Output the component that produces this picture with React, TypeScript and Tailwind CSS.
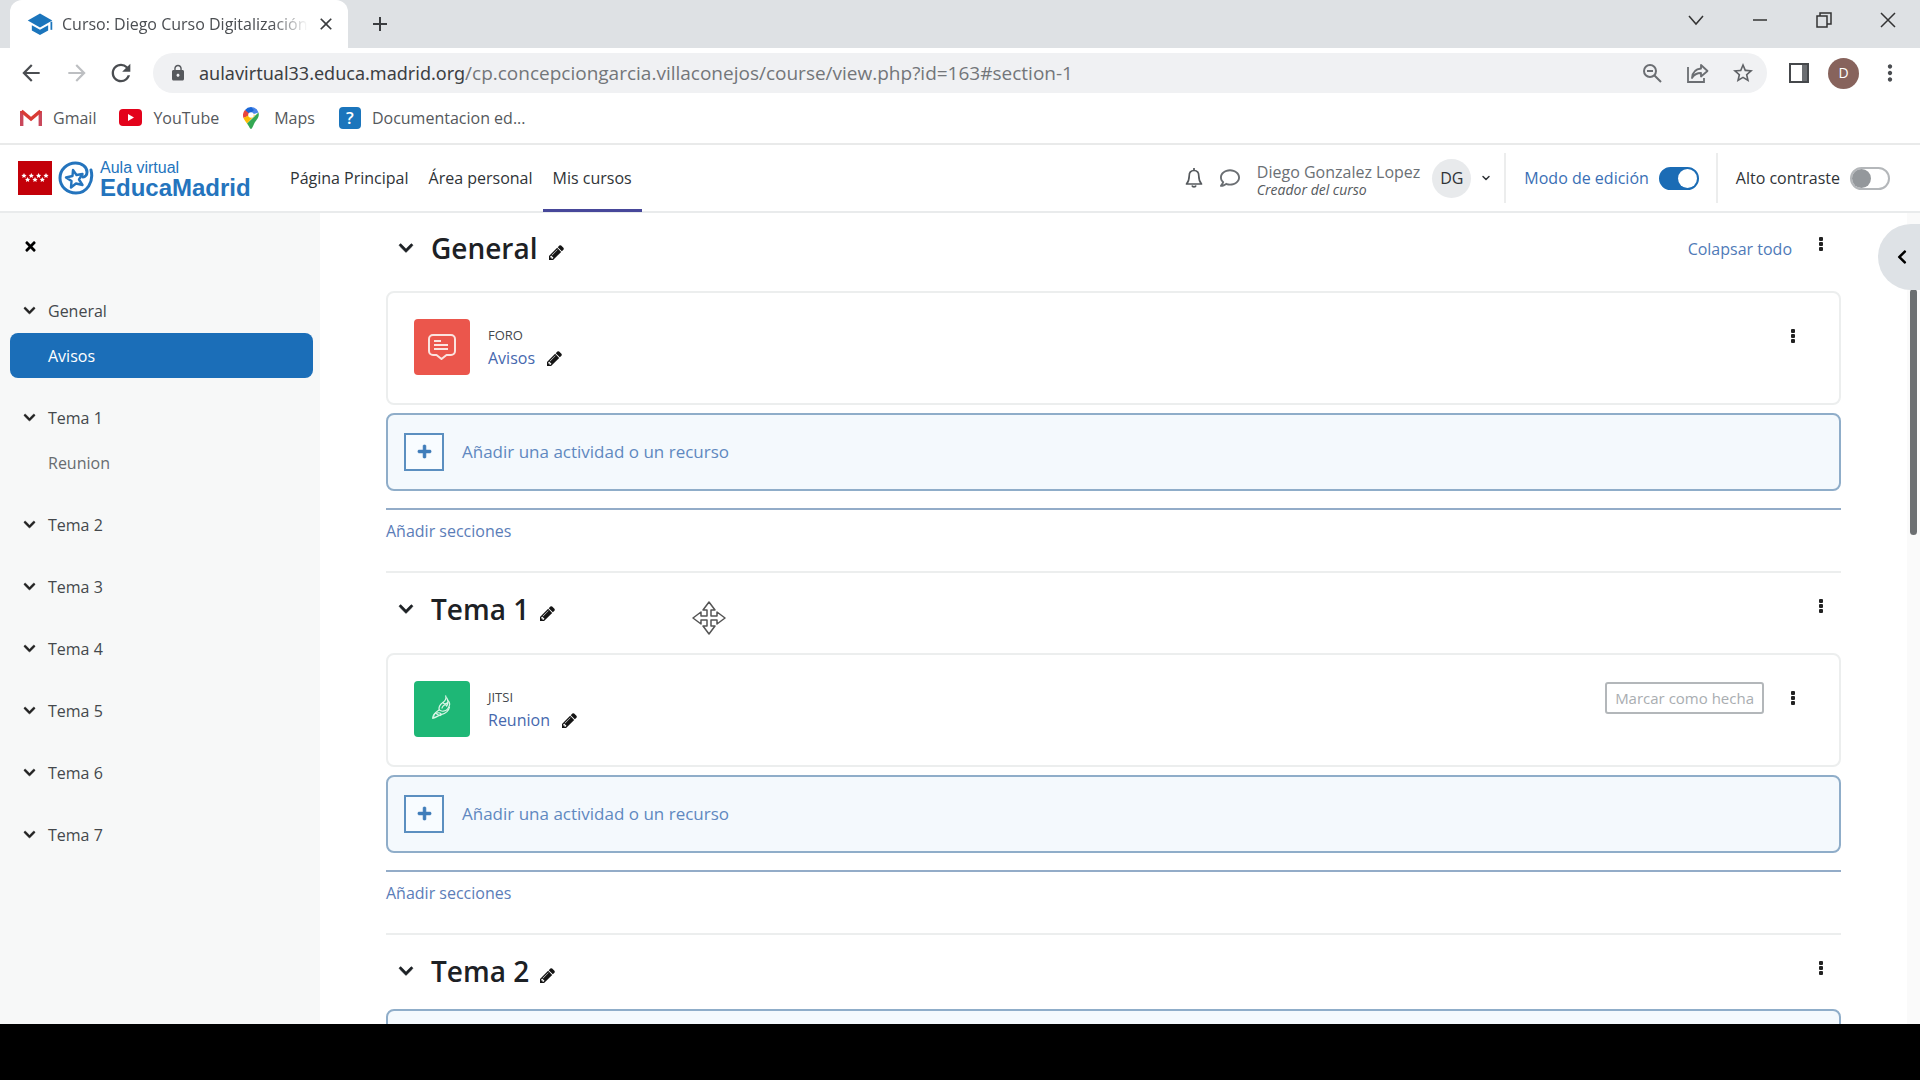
import React, { useState } from 'react';
import {
  MdArrowBack,
  MdArrowForward,
  MdRefresh,
  MdLock,
  MdClose,
  MdAdd,
  MdStarBorder,
  MdMoreVert,
} from 'react-icons/md';
import { FaChevronDown, FaChevronLeft, FaPlus, FaRegComment, FaTimes } from 'react-icons/fa';
import { ChevronDown } from 'lucide-react';
import clsx from 'clsx';

interface Activity {
  type: string;
  name: string;
  color: string;
  icon: React.ReactNode;
  canComplete?: boolean;
}

interface Section {
  title: string;
  activities: Activity[];
}

const ForumIcon = () => (
  <svg viewBox="0 0 28 28" className="size-7" fill="none" stroke="#fbe3df" strokeWidth="2">
    <path d="M5 2h18a4 4 0 0 1 4 4v12a4 4 0 0 1-4 4h-4.500l-5 4-5-4H5a4 4 0 0 1-4-4V6a4 4 0 0 1 4-4z" strokeLinejoin="round" />
    <path d="M6 8h7M6 12h14M6 16h14" />
  </svg>
);

const JitsiIcon = () => (
  <svg viewBox="0 0 24 30" className="h-7 w-6" fill="none" stroke="#d9f5e6" strokeWidth="1.300" strokeLinejoin="round" strokeLinecap="round">
    <path d="M16 1c1 3-.5 5-3 7-3 2-5 4-4 8 2 2 7 2 9-1 3-4 3-7 0-9" />
    <path d="M9 16c-3 2-7 4-7 9 4-1 6-3 9-4 4-1 8-3 9-8" />
    <path d="M3 24c0-3 2-5 5-5s4 2 2 3M13 8c1 2 3 2 5 0M12 14c1-3 3-4 5-3M17 3c2 3 2 6 0 9M6 20l3 2" />
  </svg>
);

const PencilIcon = () => (
  <svg viewBox="0 0 1536 1536" className="size-[15px]" fill="#151515">
    <path d="M363 1408l91-91-235-235-91 91v107h128v128h107zM886 480q0-22-22-22-10 0-17 7l-542 542q-7 7-7 17 0 22 22 22 10 0 17-7l542-542q7-7 7-17zM832 288l416 416-832 832H0v-416zM1515 384q0 53-37 90l-166 166-416-416 166-165q36-38 90-38 53 0 91 38l235 234q37 39 37 91z" />
  </svg>
);

const sections: Section[] = [
  {
    title: 'General',
    activities: [{ type: 'FORO', name: 'Avisos', color: 'bg-[#eb564c]', icon: <ForumIcon /> }],
  },
  {
    title: 'Tema 1',
    activities: [
      { type: 'JITSI', name: 'Reunion', color: 'bg-[#1eb776]', icon: <JitsiIcon />, canComplete: true },
    ],
  },
  { title: 'Tema 2', activities: [] },
  { title: 'Tema 3', activities: [] },
  { title: 'Tema 4', activities: [] },
  { title: 'Tema 5', activities: [] },
  { title: 'Tema 6', activities: [] },
  { title: 'Tema 7', activities: [] },
];

const BrowserTabs = () => (
  <div className="flex h-12 shrink-0 items-stretch bg-[#dee1e4] pl-2.5">
    <div className="flex w-[338px] items-center rounded-t-xl bg-white pr-3 pl-4">
      <svg viewBox="0 0 24 24" className="size-7 shrink-0" fill="#1b75bc">
        <path d="M12 3 1.500 9 12 15l10.500-6z" />
        <path d="M5 13v4.500l7 4 7-4V13l-7 4z" />
        <path d="M21 10h1.500v7H21z" />
      </svg>
      <span className="ml-2 flex-1 overflow-hidden text-[16px] whitespace-nowrap text-[#4b4e52] [mask-image:linear-gradient(to_right,black_85%,transparent)]">
        Curso: Diego Curso Digitalización
      </span>
      <button aria-label="Cerrar pestaña" className="ml-2">
        <MdClose className="size-5 text-[#3a3c3f]" />
      </button>
    </div>
    <button aria-label="Nueva pestaña" className="ml-5">
      <MdAdd className="size-6 text-[#3a3c3f]" />
    </button>
    <div className="ml-auto flex h-10 items-center text-[#333]">
      <button aria-label="Buscar pestañas" className="flex w-[65px] justify-center">
        <svg viewBox="0 0 16 16" className="size-4" fill="none" stroke="currentColor" strokeWidth="1.500">
          <path d="M1 4l7 8 7-8" />
        </svg>
      </button>
      <button aria-label="Minimizar" className="flex w-16 justify-center">
        <svg viewBox="0 0 16 16" className="size-4" stroke="currentColor" strokeWidth="1.500">
          <path d="M1 8h14" />
        </svg>
      </button>
      <button aria-label="Restaurar" className="flex w-16 justify-center">
        <svg viewBox="0 0 16 16" className="size-4" fill="none" stroke="currentColor" strokeWidth="1.500">
          <path d="M1 4h10v11H1zM4 4V1h11v11h-4" />
        </svg>
      </button>
      <button aria-label="Cerrar" className="flex w-16 justify-center">
        <svg viewBox="0 0 16 16" className="size-4" stroke="currentColor" strokeWidth="1.500">
          <path d="M1 1l14 14M15 1L1 15" />
        </svg>
      </button>
    </div>
  </div>
);

const AddressBar = () => {
  const [url, setUrl] = useState('/cp.concepciongarcia.villaconejos/course/view.php?id=163#section-1');

  return (
    <div className="flex h-[50px] shrink-0 items-center bg-white pr-[17px] pl-[18px] text-[#4a4d51]">
      <button aria-label="Atrás">
        <MdArrowBack className="size-[26px]" />
      </button>
      <button aria-label="Adelante" className="ml-5 text-[#bdbfc2]">
        <MdArrowForward className="size-[26px]" />
      </button>
      <button aria-label="Recargar" className="ml-[17px]">
        <MdRefresh className="size-7" />
      </button>
      <div className="ml-[18px] flex h-10 flex-1 items-center rounded-full bg-[#f0f1f3] pr-3 pl-4">
        <MdLock className="size-[18px] shrink-0 text-[#56595d]" />
        <label htmlFor="url" className="ml-3 font-['Noto_Sans',sans-serif] text-[18px] text-[#3c3f43]">
          aulavirtual33.educa.madrid.org
        </label>
        <input
          id="url"
          value={url}
          onChange={(e) => setUrl(e.target.value)}
          className="min-w-0 flex-1 bg-transparent text-[19px] text-[#73767a] outline-none"
        />
        <button aria-label="Zoom" className="ml-4">
          <svg viewBox="0 0 20 20" className="size-5" fill="none" stroke="#6b6e72" strokeWidth="2">
            <circle cx="8" cy="8" r="6" />
            <path d="M12.500 12.500L19 19M5 8h6" />
          </svg>
        </button>
        <button aria-label="Compartir" className="ml-[25px]">
          <svg viewBox="0 0 22 20" className="h-5 w-[22px]" fill="none" stroke="#6b6e72" strokeWidth="1.800">
            <path d="M1 4v15h16v-4" />
            <path d="M14 2l6.500 6-6.500 5.500V10c-4 0-7 1.500-9 5 .5-5.500 3.500-9 9-9.500z" strokeLinejoin="round" />
          </svg>
        </button>
        <button aria-label="Marcador" className="ml-[22px]">
          <MdStarBorder className="size-6 text-[#5f6266]" />
        </button>
      </div>
      <button aria-label="Panel lateral" className="ml-[22px]">
        <svg viewBox="0 0 20 20" className="size-5" fill="none" stroke="#45484b" strokeWidth="2">
          <path d="M13 1h6v18h-6z" fill="#6b6e72" stroke="none" />
          <path d="M1 1h18v18H1z" />
        </svg>
      </button>
      <button
        aria-label="Perfil"
        className="ml-[19px] flex size-[31px] items-center justify-center rounded-full bg-[#87635c] text-sm text-white"
      >
        D
      </button>
      <button aria-label="Menú" className="ml-[18px]">
        <MdMoreVert className="size-[26px]" />
      </button>
    </div>
  );
};

const Bookmarks = () => (
  <nav className="flex h-[47px] shrink-0 items-center border-b-2 border-[#e9eaea] bg-white pb-1.5 pl-5 text-[16px] text-[#55585c]">
    <a href="#gmail" className="flex items-center gap-[11px]">
      <svg viewBox="0 0 22 17" className="h-[17px] w-[22px]" fill="none" strokeWidth="3.400">
        <path d="M1.700 17V2" stroke="#c9485b" />
        <path d="M20.300 17V2" stroke="#c9485b" />
        <path d="M1.500 2L11 10l9.500-8" stroke="#d93b34" />
      </svg>
      Gmail
    </a>
    <a href="#youtube" className="ml-[23px] flex items-center gap-[11px]">
      <svg viewBox="0 0 23 17" className="h-[17px] w-[23px]">
        <rect width="23" height="17" rx="4" fill="#e3021b" />
        <path d="M9 5v7l6-3.500z" fill="#fff" />
      </svg>
      YouTube
    </a>
    <a href="#maps" className="ml-6 flex items-center gap-[15px]">
      <svg viewBox="0 0 16 22" className="h-[22px] w-4">
        <path d="M8 0a8 8 0 0 1 7.500 5.500L8 8z" fill="#4a86e8" />
        <path d="M2 3a8 8 0 0 1 6-3l3 3-6 6z" fill="#1a66d6" />
        <path d="M2 3a8 8 0 0 0-1.500 8L8 8z" fill="#e8453c" />
        <path d="M.5 11c.5 1.500 2 3.500 3.500 5.500L12 8l-4-1z" fill="#fbbc04" />
        <path d="M15.500 5.500c1.500 5-3 8-4.500 11.500-1 2-2 5-3 5s-2-3-4-5.500z" fill="#34a853" />
        <circle cx="8" cy="8" r="2.800" fill="#fff" />
      </svg>
      Maps
    </a>
    <a href="#documentacion" className="ml-6 flex items-center gap-[11px]">
      <span className="flex size-[22px] items-center justify-center rounded-sm bg-[#1b75bc] text-[17px] font-semibold text-white">
        ?
      </span>
      Documentacion ed...
    </a>
  </nav>
);

const Logo = () => (
  <a href="#inicio" className="flex w-[234px] items-center" aria-label="Aula virtual EducaMadrid">
    <svg viewBox="0 0 34 34" className="size-[34px]">
      <rect width="34" height="34" fill="#c30009" />
      <g fill="#fff">
        <path d="M6 12l.8 1.700 1.800.2-1.300 1.300.3 1.800L6 16.100 4.400 17l.3-1.800-1.300-1.300 1.800-.2z" />
        <path d="M13.300 12l.8 1.700 1.800.2-1.300 1.300.3 1.800-1.600-.9-1.600.9.3-1.800-1.300-1.300 1.800-.2z" />
        <path d="M20.600 12l.8 1.700 1.800.2-1.300 1.300.3 1.800-1.600-.9-1.600.9.3-1.800-1.300-1.300 1.800-.2z" />
        <path d="M28 12l.8 1.700 1.800.2-1.300 1.300.3 1.800-1.600-.9-1.600.9.3-1.800-1.300-1.300 1.800-.2z" />
        <path d="M9.600 16l.8 1.700 1.800.2-1.300 1.300.3 1.800-1.600-.9-1.600.9.3-1.800L7 17.900l1.800-.2z" />
        <path d="M17 16l.8 1.700 1.800.2-1.300 1.300.3 1.800-1.600-.9-1.600.9.3-1.800-1.300-1.300 1.800-.2z" />
        <path d="M24.300 16l.8 1.700 1.800.2-1.300 1.300.3 1.800-1.600-.9-1.600.9.3-1.800-1.300-1.300 1.800-.2z" />
      </g>
    </svg>
    {/* Ring with an open end and a star in it */}
    <svg viewBox="0 0 36 34" className="ml-[6px] h-[34px] w-9" fill="none" stroke="#2474bd" strokeLinecap="round">
      <path d="M33 9c3 12-4 23-15 23C9 32 2 25.500 2 17S9 2 17.500 2C24 2 29 6 29 11c0 3-2 5-4 5" strokeWidth="3" />
      <path d="M15 9l3.500 5 6-1-3.500 5.500 3.500 5.500-6.500-1.500-5 4 .5-6.500-5.500-3.500 6.500-1.500z" strokeWidth="2.400" strokeLinejoin="round" />
    </svg>
    <span className="ml-1.5 flex flex-col pt-[3px] font-['Liberation_Sans',sans-serif] whitespace-nowrap text-[#2474bd]">
      <span className="text-[16px] leading-4">Aula virtual</span>
      <span className="text-[24px] leading-6 font-bold">EducaMadrid</span>
    </span>
  </a>
);

interface ToggleProps {
  id: string;
  label: string;
  defaultChecked?: boolean;
  className?: string;
}

const Toggle: React.FC<ToggleProps> = ({ id, label, defaultChecked, className }) => (
  <div className={clsx('flex h-[50px] items-center gap-2.5 border-l-2 border-[#eceded] pl-[18px]', className)}>
    <label htmlFor={id}>{label}</label>
    <input
      id={id}
      type="checkbox"
      role="switch"
      defaultChecked={defaultChecked}
      className="flex h-[23px] w-10 appearance-none items-center rounded-full border-2 border-[#b4b7ba] bg-white before:size-[19px] before:rounded-full before:bg-[#94989c] checked:justify-end checked:border-[#1b6cb5] checked:bg-[#1b6cb5] checked:before:bg-white"
    />
  </div>
);

const navLinks = [
  { label: 'Página Principal', active: false },
  { label: 'Área personal', active: false },
  { label: 'Mis cursos', active: true },
];

const SiteHeader = () => (
  <header className="flex h-[68px] shrink-0 items-center border-b-2 border-[#e9ebec] bg-white pr-[30px] pl-[18px] text-[#2f3337]">
    <Logo />
    <nav className="ml-7 flex h-[68px]">
      {navLinks.map(({ label, active }) => (
        <a
          key={label}
          href="#nav"
          className={clsx(
            'flex items-center border-b-[3px] px-2.5 pt-[3px] text-[16px]',
            active ? 'border-[#47489a]' : 'border-transparent'
          )}
        >
          {label}
        </a>
      ))}
    </nav>

    <div className="ml-auto flex items-center">
      <button aria-label="Notificaciones">
        <svg viewBox="0 0 18 20" className="h-5 w-[18px]" fill="none" stroke="#55595d" strokeWidth="1.700">
          <path d="M9 2.500c-3.500 0-4.800 2.500-4.800 5.500 0 4-1 6-2.700 8h15c-1.700-2-2.700-4-2.700-8 0-3-1.300-5.500-4.800-5.500z" strokeLinejoin="round" />
          <path d="M9 0v3M7 17.500c.5 1.800 3.500 1.800 4 0" />
        </svg>
      </button>
      <button aria-label="Mensajes" className="ml-[17px]">
        <FaRegComment className="size-5 text-[#6a6e72]" />
      </button>
      <div className="ml-[17px] flex flex-col pt-1 text-[#6b7075]">
        <span className="text-[16px] leading-5">Diego Gonzalez Lopez</span>
        <span className="text-[14px] leading-4 text-[#55595d] italic">Creador del curso</span>
      </div>
      <button className="ml-3 flex items-center gap-[9px]" aria-label="Menú de usuario">
        <span className="flex size-[39px] items-center justify-center rounded-full bg-[#e8eaec] text-[16px]">DG</span>
        <ChevronDown className="size-3" strokeWidth={3} />
      </button>
      <Toggle id="edicion" label="Modo de edición" defaultChecked className="ml-3 text-[#3a6fb5]" />
      <Toggle id="contraste" label="Alto contraste" className="ml-[17px]" />
    </div>
  </header>
);

const Sidebar = () => (
  <aside className="w-80 shrink-0 bg-[#f7f8f8] px-2.5 text-[16px] text-[#44484c]">
    <button aria-label="Cerrar índice" className="flex h-[66px] w-10 items-center justify-center">
      <FaTimes className="size-[15px] text-black" />
    </button>
    <ul className="mt-[9px] flex flex-col gap-[17px]">
      {sections.map((section, index) => (
        <li key={section.title}>
          <a href="#seccion" className="flex h-[45px] items-center gap-3 pl-[13px]">
            <FaChevronDown className="size-[13px] text-[#222]" stroke="currentColor" strokeWidth={20} />
            {section.title}
          </a>
          {section.activities.map((activity) => (
            <a
              key={activity.name}
              href="#actividad"
              className={clsx(
                'flex h-[45px] w-[303px] items-center rounded-lg pl-[38px]',
                index === 0 ? 'bg-[#1b6eb8] text-white' : 'text-[#686c70]'
              )}
            >
              {activity.name}
            </a>
          ))}
        </li>
      ))}
    </ul>
  </aside>
);

const Kebab = () => (
  <button aria-label="Acciones" className="flex w-6 justify-center">
    <svg viewBox="0 0 6 14" className="h-[14px] w-[6px]" fill="#222">
      <rect x="1" y="0" width="4" height="4" rx="1" />
      <rect x="1" y="5" width="4" height="4" rx="1" />
      <rect x="1" y="10" width="4" height="4" rx="1" />
    </svg>
  </button>
);

const ActivityCard: React.FC<{ activity: Activity }> = ({ activity }) => (
  <div className="mt-[6px] mb-2 flex h-[114px] items-start rounded-lg border-2 border-[#eceeee] bg-white pt-[26px] pr-[34px] pl-[26px]">
    <div className={clsx('flex size-14 items-center justify-center rounded', activity.color)}>{activity.icon}</div>
    <div className="ml-[18px] flex flex-col pt-[6px]">
      <span className="text-[13px] leading-5 text-[#44484c]">{activity.type}</span>
      <span className="flex items-center gap-3 text-[16px] leading-[26px]">
        <a href="#actividad" className="text-[#4668ae]">
          {activity.name}
        </a>
        <button aria-label="Editar nombre">
          <PencilIcon />
        </button>
      </span>
    </div>
    <div className="ml-auto flex h-[34px] items-center gap-[17px]">
      {activity.canComplete && (
        <button className="h-8 rounded-[3px] border-2 border-[#b3b7ba] px-2 text-[15px] leading-6 text-[#a9adb1]">
          Marcar como hecha
        </button>
      )}
      <Kebab />
    </div>
  </div>
);

const CourseSection: React.FC<{ section: Section; first: boolean }> = ({ section, first }) => (
  <section className={clsx('pb-5', !first && 'border-t-2 border-[#eceeee]')}>
    <div className={clsx('flex items-center pr-2 pb-0.5 pl-3', first ? 'h-[72px]' : 'h-[74px]')}>
      <button aria-label="Contraer" className="flex w-4 justify-center">
        <FaChevronDown className="size-4 text-[#1d2125]" stroke="currentColor" strokeWidth={20} />
      </button>
      <h3 className="ml-[17px] text-[28px] leading-10 font-semibold text-[#1d2125]">{section.title}</h3>
      <button aria-label="Editar título" className="mt-2 ml-[11px]">
        <PencilIcon />
      </button>
      <div className="ml-auto flex items-start gap-[17px]">
        {first && (
          <a href="#colapsar" className="pt-0.5 text-[16px] leading-6 text-[#4f7ab8]">
            Colapsar todo
          </a>
        )}
        <div className="h-6 pt-0.5">
          <Kebab />
        </div>
      </div>
    </div>
    {section.activities.map((activity) => (
      <ActivityCard key={activity.name} activity={activity} />
    ))}
    <button className="flex h-[78px] w-full items-center rounded-lg border-2 border-[#8fadc9] bg-[#f4f9fd] pl-4 text-[17px] text-[#6088c0]">
      <span className="flex h-[38px] w-10 items-center justify-center border-2 border-[#5b8fc0] bg-[#f8fcff] pb-0.5">
        <FaPlus className="size-[15px] text-[#3f7dba]" stroke="currentColor" strokeWidth={20} />
      </span>
      <span className="ml-[18px]">Añadir una actividad o un recurso</span>
    </button>
    <div className="mt-[17px] flex h-[43px] items-center border-t-2 border-[#93acc8]">
      <a href="#secciones" className="text-[16px] text-[#5b7db8]">
        Añadir secciones
      </a>
    </div>
  </section>
);

const MoveCursor = () => (
  <svg viewBox="0 0 34 34" className="pointer-events-none absolute top-[388px] left-[692px] size-[34px]" fill="#fff" stroke="#555" strokeWidth="1.500" strokeLinejoin="round">
    <path d="M17 1l6 8h-4v6h6v-4l8 6-8 6v-4h-6v6h4l-6 8-6-8h4v-6H9v4l-8-6 8-6v4h6V9h-4z" />
  </svg>
);

export default function App() {
  return (
    <div className="flex h-screen flex-col overflow-hidden bg-black font-['Open_Sans','Noto_Sans',sans-serif] text-[16px]">
      <BrowserTabs />
      <AddressBar />
      <Bookmarks />
      <SiteHeader />

      <div className="relative flex min-h-0 flex-1 overflow-hidden bg-white">
        <Sidebar />
        <main className="min-w-0 flex-1 px-[66px]">
          {sections.slice(0, 3).map((section, index) => (
            <CourseSection key={section.title} section={section} first={index === 0} />
          ))}
        </main>
        {/* Scrollbar */}
        <div className="w-[13px] shrink-0 bg-[#fafafa] pt-[76px] pl-[3px]">
          <div className="h-[246px] w-[7px] rounded-full bg-[#6c6f71]" />
        </div>

        <button
          aria-label="Abrir cajón de bloques"
          className="absolute top-[11px] right-0 flex h-[66px] w-[42px] items-center rounded-l-full bg-[#dee2e6] pl-4"
        >
          <FaChevronLeft className="size-4 text-black" />
        </button>
        <MoveCursor />
      </div>

      <div className="h-14 shrink-0 bg-black" />
    </div>
  );
}
